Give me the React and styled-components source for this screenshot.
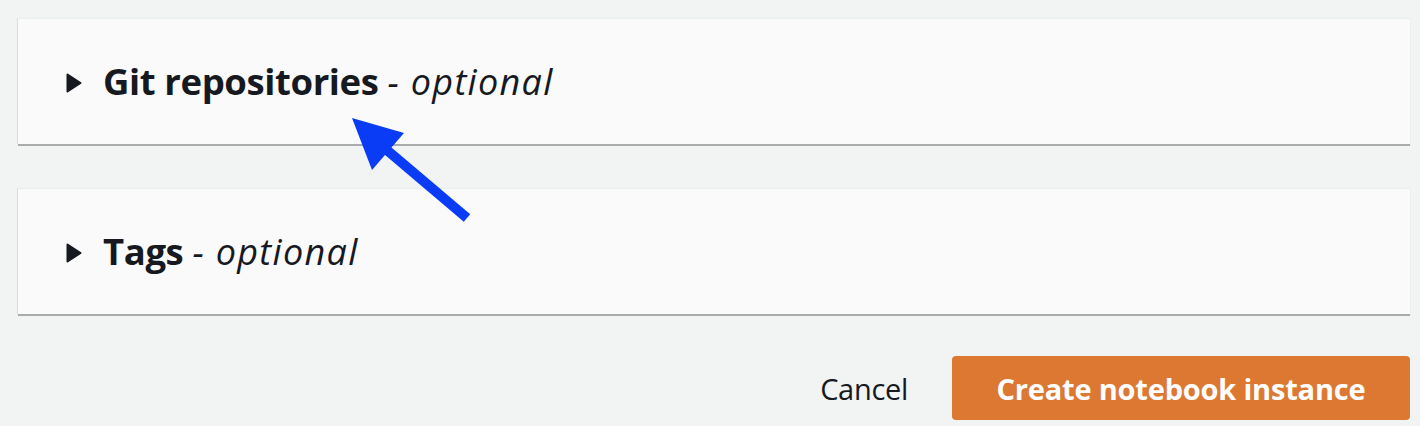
import React from "react";
import styled, { createGlobalStyle } from "styled-components";

const Global = createGlobalStyle`
  html, body { margin: 0; padding: 0; background: #f2f3f3; }
  body { font-family: "Open Sans", "Noto Sans", sans-serif; color: #16191f; }
`;

const Page = styled.div`
  position: relative;
  width: 1420px;
  height: 426px;
  box-sizing: border-box;
  padding: 18px 10px 0 18px;
  display: flex;
  flex-direction: column;
  gap: 44px;
`;

const Panel = styled.section`
  height: 126px;
  background: #fafafa;
  border-top: 1px solid #eaeded;
  box-shadow: 0 2px 0 0 #a7abab, 0 1px 1px 0 rgba(0,0,0,0.15), -1px 0 1px 0 rgba(0,0,0,0.06);
  display: flex;
  align-items: center;
  padding-left: 48px;
  box-sizing: border-box;
`;

const Header = styled.h2`
  margin: 0;
  display: flex;
  align-items: center;
  gap: 21px;
  font-size: 36.5px;
  line-height: 1;
  font-weight: 700;
  color: #16191f;
  letter-spacing: -0.4px;
`;

const Caret = styled.svg`
  width: 16px;
  height: 20px;
  flex: none;
  margin-top: 2px;
`;

const Optional = styled.span`
  font-weight: 400;
  font-style: italic;
  font-size: 36px;
  letter-spacing: 1.3px;
`;

const Footer = styled.div`
  display: flex;
  justify-content: flex-end;
  align-items: center;
  gap: 44px;
  margin-top: -2px;
`;

const LinkButton = styled.button`
  border: none;
  background: none;
  padding: 0;
  font-family: inherit;
  font-size: 29px;
  color: #16191f;
  letter-spacing: -0.3px;
`;

const PrimaryButton = styled.button`
  border: none;
  background: #dd7833;
  color: #fff;
  border-radius: 4px;
  height: 64px;
  width: 458px;
  font-family: inherit;
  font-weight: 700;
  font-size: 29px;
  letter-spacing: -0.2px;
`;

const Arrow = styled.svg`
  position: absolute;
  left: 340px;
  top: 108px;
  width: 140px;
  height: 125px;
  pointer-events: none;
`;

const Section = ({ title }) => (
  <Panel>
    <Header>
      <Caret viewBox="0 0 16 20">
        <path d="M1.5 1.5 L14.5 10 L1.5 18.5 Z" fill="#16191f" stroke="#16191f" strokeWidth="2" strokeLinejoin="round" />
      </Caret>
      <span>
        {title} <Optional>- optional</Optional>
      </span>
    </Header>
  </Panel>
);

export default function App() {
  return (
    <>
      <Global />
      <Page>
        <Section title="Git repositories" />
        <Section title="Tags" />
        <Footer>
          <LinkButton>Cancel</LinkButton>
          <PrimaryButton>Create notebook instance</PrimaryButton>
        </Footer>
        <Arrow viewBox="340 108 140 125">
          <line x1="467" y1="218" x2="375" y2="140" stroke="#0a3cf5" strokeWidth="10" />
          <polygon points="352,118 404,133 372,170" fill="#0a3cf5" />
        </Arrow>
      </Page>
    </>
  );
}
